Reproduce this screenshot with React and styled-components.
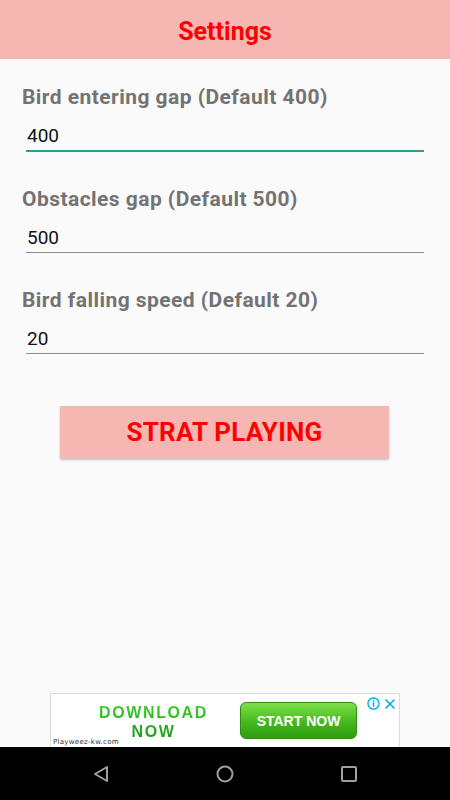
import styled, { createGlobalStyle } from "styled-components";

const GlobalStyle = createGlobalStyle`
  html, body {
    margin: 0;
    padding: 0;
    background: #fafafa;
    font-family: Roboto, "Liberation Sans", sans-serif;
  }
  * { box-sizing: border-box; }
`;

const fields = [
  { label: "Bird entering gap (Default 400)", value: "400", focused: true },
  { label: "Obstacles gap (Default 500)", value: "500" },
  { label: "Bird falling speed (Default 20)", value: "20" },
];

function App() {
  return (
    <Screen>
      <GlobalStyle />
      <Header>Settings</Header>
      <Form>
        {fields.map((f) => (
          <Field key={f.label}>
            <Label>{f.label}</Label>
            <Input defaultValue={f.value} $focused={f.focused} type="text" />
          </Field>
        ))}
      </Form>
      <PlayButton>STRAT PLAYING</PlayButton>

      <Ad>
        <AdHeadline>
          DOWNLOAD
          <br />
          NOW
        </AdHeadline>
        <AdButton>START NOW</AdButton>
        <AdIcons>
          <svg width="13" height="13" viewBox="0 0 14 14">
            <circle cx="7" cy="7" r="6" fill="none" stroke="#00aed9" strokeWidth="1.5" />
            <circle cx="7" cy="4" r="1" fill="#00aed9" />
            <rect x="6.2" y="5.8" width="1.6" height="4.8" fill="#00aed9" />
          </svg>
          <svg width="12" height="12" viewBox="0 0 12 12">
            <path d="M1.5 1.5 L10.5 10.5 M10.5 1.5 L1.5 10.5" stroke="#00aed9" strokeWidth="1.6" />
          </svg>
        </AdIcons>
        <AdDomain>Playweez-kw.com</AdDomain>
      </Ad>

      <NavBar>
        <svg width="18" height="18" viewBox="0 0 18 18">
          <path d="M15 2 L3 9 L15 16 Z" fill="none" stroke="#a0a0a0" strokeWidth="2" strokeLinejoin="round" />
        </svg>
        <svg width="18" height="18" viewBox="0 0 18 18">
          <circle cx="9" cy="9" r="7.5" fill="none" stroke="#a0a0a0" strokeWidth="2" />
        </svg>
        <svg width="18" height="18" viewBox="0 0 18 18">
          <rect x="2" y="2" width="14" height="14" rx="1" fill="none" stroke="#a0a0a0" strokeWidth="2" />
        </svg>
      </NavBar>
    </Screen>
  );
}

export default App;

const Screen = styled.div`
  min-height: 100vh;
  display: flex;
  flex-direction: column;
  background: #fafafa;
`;

const Header = styled.div`
  height: 59px;
  padding-top: 4px;
  line-height: 55px;
  background: #f6b7b2;
  color: #ff0000;
  text-align: center;
  font-size: 25px;
  font-weight: 700;
`;

const Form = styled.div`
  display: flex;
  flex-direction: column;
  gap: 35px;
  padding: 26px 26px 0 22px;
`;

const Field = styled.div`
  display: flex;
  flex-direction: column;
  gap: 15px;
`;

const Label = styled.div`
  font-size: 21px;
  line-height: 24px;
  font-weight: 700;
  letter-spacing: 0.45px;
  color: #737373;
  white-space: nowrap;
`;

const Input = styled.input`
  margin-left: 4px;
  height: ${(p) => (p.$focused ? "28px" : "27px")};
  padding: 0 0 3px 1px;
  border: none;
  border-bottom: ${(p) => (p.$focused ? "2px solid #26a08f" : "1px solid #8a8a8a")};
  background: transparent;
  font-family: Roboto, "Liberation Sans", sans-serif;
  font-size: 19px;
  color: #111;
  outline: none;
`;

const PlayButton = styled.button`
  align-self: flex-start;
  margin: 52px 0 0 60px;
  width: 329px;
  height: 52px;
  border: none;
  background: #f6b7b2;
  box-shadow: 0 2px 2px rgba(0, 0, 0, 0.22);
  color: #ff0000;
  font-family: Roboto, "Liberation Sans", sans-serif;
  font-size: 26px;
  font-weight: 700;
  letter-spacing: 0.2px;
`;

const Ad = styled.div`
  position: relative;
  margin: auto 0 0 50px;
  width: 350px;
  height: 54px;
  background: #fff;
  border: 1px solid #dcdcdc;
  border-bottom: none;
  display: flex;
  align-items: center;
  padding-left: 45px;
  gap: 29px;
`;

const AdHeadline = styled.div`
  width: 115px;
  text-align: center;
  font-family: "Liberation Sans", Arial, sans-serif;
  font-weight: 700;
  font-size: 16px;
  line-height: 19px;
  letter-spacing: 1.6px;
  color: #1fa81f;
  background: linear-gradient(#3fcf2a, #129a12);
  -webkit-background-clip: text;
  background-clip: text;
  -webkit-text-fill-color: transparent;
  margin-top: 3px;
`;

const AdButton = styled.div`
  width: 117px;
  height: 37px;
  border-radius: 6px;
  background: linear-gradient(#7ee04a, #45b81e 55%, #2f9d10);
  border: 1px solid #2d8e12;
  color: #fff;
  font-family: "Liberation Sans", Arial, sans-serif;
  font-weight: 700;
  font-size: 14px;
  display: flex;
  align-items: center;
  justify-content: center;
`;

const AdIcons = styled.div`
  position: absolute;
  top: 3px;
  right: 3px;
  display: flex;
  align-items: center;
  gap: 4px;
`;

const AdDomain = styled.div`
  position: absolute;
  left: 2px;
  bottom: 1px;
  font-family: "DejaVu Sans", sans-serif;
  font-size: 7px;
  letter-spacing: 0.3px;
  color: #333;
`;

const NavBar = styled.div`
  height: 53px;
  background: #000;
  display: flex;
  align-items: center;
  justify-content: center;
  gap: 106px;
`;
